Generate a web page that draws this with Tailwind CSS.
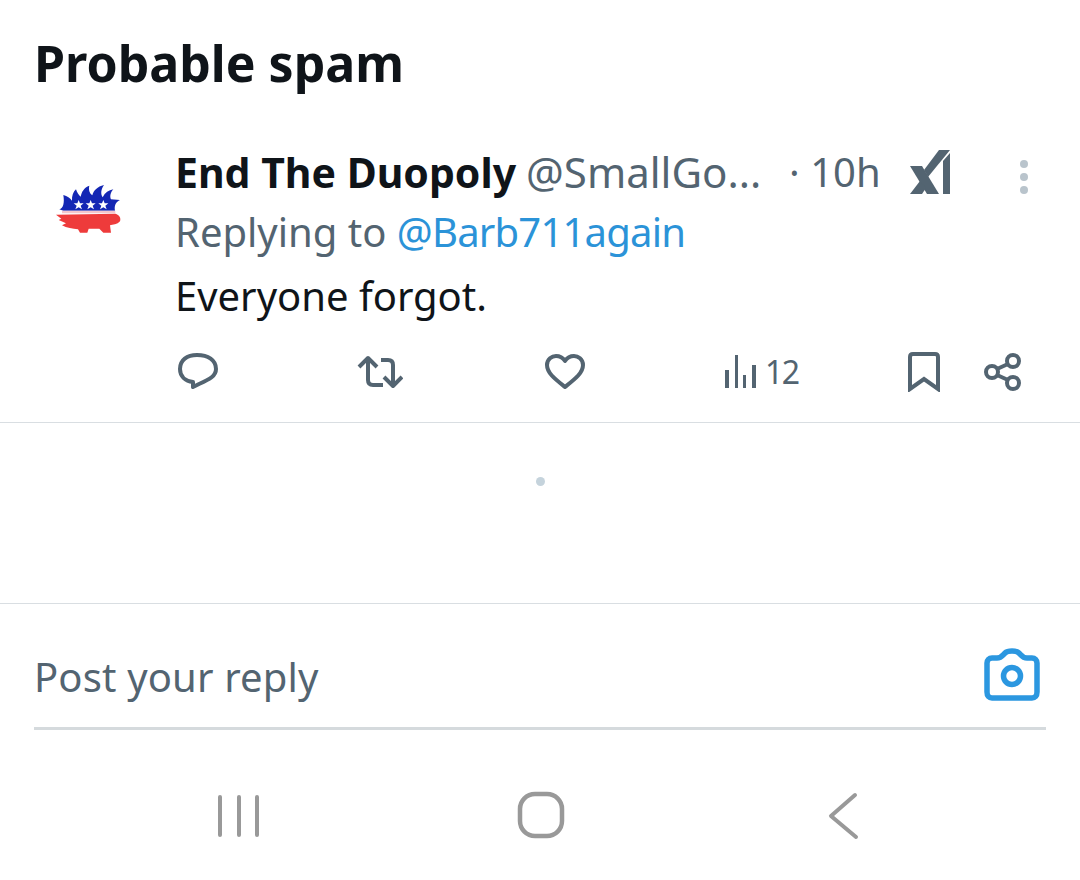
<!DOCTYPE html>
<html lang="en">
<head>
  <meta charset="UTF-8" />
  <title>Probable spam</title>
  <script src="https://cdn.jsdelivr.net/npm/@tailwindcss/browser@4"></script>
</head>
<body class="bg-white font-['Noto_Sans',sans-serif] w-[1080px] h-[880px] overflow-hidden">

  <!-- Section title -->
  <div class="h-[130px] pl-[34px] pt-[35px]">
    <h1 class="text-[50px] leading-[56px] font-bold text-[#0f1419]">Probable spam</h1>
  </div>

  <!-- Post -->
  <div class="h-[293px] border-b border-[#d9dee2] flex">
    <div class="w-[175px] pl-[30px] shrink-0 pt-[10px]">
      <svg width="120" height="110" viewBox="0 0 360 330">
        <path fill="#1427b4" d="M88 208C100 204 104 190 100 165C112 168 120 174 126 182C125 168 130 155 138 148C141 157 146 165 152 170C155 155 162 143 178 137C175 150 179 160 187 166C191 151 202 140 222 135C212 150 212 162 218 172C225 158 236 150 250 148C241 158 239 170 243 178L270 180C258 186 252 196 255 212L100 212Z"/>
        <path fill="#f4c6cc" d="M96 212H256V220H96Z"/>
        <path fill="#ee3b3b" d="M78 224L256 221C268 224 274 234 270 244C262 254 248 254 240 256L243 278L220 278L208 266L176 266L172 278L150 278L144 268C128 266 110 264 96 256L108 250L86 240L94 236Z"/>
        <g fill="#fff">
          <path d="M146 180L150 190L161 190L152 197L156 208L146 202L136 208L140 197L131 190L142 190Z"/>
          <path d="M182 180L186 190L197 190L188 197L192 208L182 202L172 208L176 197L167 190L178 190Z"/>
          <path d="M220 180L224 190L235 190L226 197L230 208L220 202L210 208L214 197L205 190L216 190Z"/>
        </g>
      </svg>
    </div>

    <div class="flex-1 pt-[18px]">
      <!-- Name row -->
      <div class="h-[48px] flex items-center">
        <span class="font-bold text-[#0f1419] text-[41px] leading-[48px] whitespace-nowrap">End The Duopoly</span>
        <span class="ml-[10px] text-[#536471] text-[42px] leading-[48px] w-[237px] whitespace-nowrap">@SmallGo...</span>
        <span class="ml-[26px] text-[#536471] text-[40px] leading-[48px] whitespace-nowrap">· 10h</span>
        <!-- xAI mark -->
        <svg class="ml-[29px]" width="42" height="44" viewBox="0 0 42 44" fill="#536471">
          <path d="M0 16H12L29 44H17Z"/>
          <path d="M0 44L10 31L16 38L12 44Z"/>
          <path d="M29 0H40L18 27L14 20Z"/>
          <path d="M33 11L40 3V44H33Z"/>
        </svg>
        <svg class="ml-[66px] mt-[10px]" width="12" height="36" viewBox="0 0 12 36" fill="#b9c4cc">
          <circle cx="6" cy="5" r="4"/><circle cx="6" cy="18" r="4"/><circle cx="6" cy="31" r="4"/>
        </svg>
      </div>

      <p class="mt-[12px] text-[40px] leading-[48px] text-[#536471]">Replying to <span class="text-[#2b93d8] tracking-[-0.8px]">@Barb711again</span></p>
      <p class="mt-[16px] text-[40px] leading-[48px] text-[#0f1419]">Everyone forgot.</p>

      <!-- Actions -->
      <div class="mt-[30px] h-[44px] flex items-center text-[#536471]">
        <svg class="ml-[2px]" width="42" height="40" viewBox="0 0 42 40" fill="none" stroke="currentColor" stroke-width="4" stroke-linejoin="round">
          <path d="M20 3C31 3 39 8 39 17C39 24 33 27 22 32L16 35V30C8 29 3 24 3 17C3 8 10 3 20 3Z"/>
        </svg>
        <svg class="ml-[138px]" width="46" height="34" viewBox="0 0 46 34" fill="none" stroke="currentColor" stroke-width="4" stroke-linejoin="round">
          <path d="M2 12L11 3L20 12"/>
          <path d="M11 4V25Q11 30 16 30H26"/>
          <path d="M24 5H31Q36 5 36 10V30"/>
          <path d="M27 22L36 31L45 22"/>
        </svg>
        <svg class="ml-[142px]" width="40" height="36" viewBox="0 0 40 36" fill="none" stroke="currentColor" stroke-width="4" stroke-linejoin="round">
          <path d="M20 33C10 25 2 19 2 11C2 5 7 2 11 2C15 2 18 4 20 7C22 4 25 2 29 2C33 2 38 5 38 11C38 19 30 25 20 33Z"/>
        </svg>
        <svg class="ml-[138px]" width="33" height="36" viewBox="0 0 33 36" fill="currentColor">
          <rect x="2" y="16" width="4" height="18"/><rect x="12" y="1" width="3" height="33"/><rect x="20" y="21" width="3" height="13"/><rect x="29" y="11" width="4" height="23"/>
        </svg>
        <span class="ml-[9px] text-[32px] leading-[40px] w-[41px] tracking-[-1.5px]">12</span>
        <svg class="ml-[102px]" width="32" height="40" viewBox="0 0 32 40" fill="none" stroke="currentColor" stroke-width="4" stroke-linejoin="miter">
          <path d="M2 37V5Q2 2 5 2H27Q30 2 30 5V37L16 27Z"/>
        </svg>
        <svg class="ml-[44px]" width="38" height="38" viewBox="0 0 38 38" fill="none" stroke="currentColor" stroke-width="4">
          <circle cx="8" cy="19" r="6"/><circle cx="29" cy="8" r="6"/><circle cx="29" cy="30" r="6"/>
          <path d="M13 16L24 11M13 22L24 27"/>
        </svg>
      </div>
    </div>
  </div>

  <!-- Loading dot -->
  <div class="h-[181px] border-b border-[#d9dee2] flex justify-center pt-[54px]">
    <div class="w-[9px] h-[9px] rounded-full bg-[#c5d3dc]"></div>
  </div>

  <!-- Reply box -->
  <div class="mx-[34px] h-[126px] border-b-[3px] border-[#d5dadd] flex justify-between items-start pt-[49px]">
    <span class="text-[40px] leading-[48px] text-[#536471] tracking-[0.15px]">Post your reply</span>
    <svg class="-mt-[5px] mr-[6px]" width="56" height="54" viewBox="0 0 56 54" fill="none" stroke="#2b97e0" stroke-width="5.5" stroke-linejoin="round">
      <path d="M8 10H13C17 10 19 7 21 5C23 3 25 3 28 3C31 3 33 3 35 5C37 7 39 10 43 10H48C51 10 53 12 53 15V44C53 48 51 50 48 50H8C5 50 3 48 3 44V15C3 12 5 10 8 10Z"/>
      <circle cx="28" cy="28" r="8.5"/>
    </svg>
  </div>

  <!-- Android nav -->
  <div class="h-[150px] relative">
    <svg class="absolute left-[216px] top-[64px]" width="46" height="44" viewBox="0 0 46 44" fill="none" stroke="#999" stroke-width="4" stroke-linecap="round">
      <path d="M4 3V41M23 3V41M41 3V41"/>
    </svg>
    <svg class="absolute left-[517px] top-[61px]" width="48" height="48" viewBox="0 0 48 48" fill="none" stroke="#999" stroke-width="4.5">
      <rect x="3" y="3" width="42" height="42" rx="15"/>
    </svg>
    <svg class="absolute left-[826px] top-[62px]" width="36" height="48" viewBox="0 0 36 48" fill="none" stroke="#999" stroke-width="4" stroke-linecap="round" stroke-linejoin="round">
      <path d="M29 3L5 24L30 45"/>
    </svg>
  </div>

</body>
</html>
